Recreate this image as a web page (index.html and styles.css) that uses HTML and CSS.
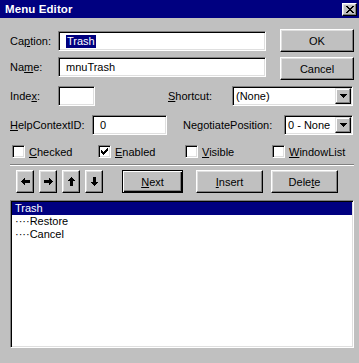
FILE: index.html
```html
<!DOCTYPE html>
<html>
<head>
<meta charset="utf-8">
<link rel="stylesheet" href="styles.css">
</head>
<body>
<div class="window">
  <div class="titlebar">
    <span class="title">Menu Editor</span>
    <div class="close">
      <svg width="8" height="7" viewBox="0 0 8 7" shape-rendering="crispEdges"><path d="M0 0h2v1h-2zM6 0h2v1h-2zM1 1h2v1h-2zM5 1h2v1h-2zM2 2h4v1h-4zM3 3h2v1h-2zM2 4h4v1h-4zM1 5h2v1h-2zM5 5h2v1h-2zM0 6h2v1h-2zM6 6h2v1h-2z" fill="#000"/></svg>
    </div>
  </div>
  <div class="content">
    <div class="top">
      <div class="fields">
        <div class="row row-caption">
          <span class="lbl w48">Ca<u>p</u>tion:</span>
          <div class="textbox w208"><span class="sel">Trash</span></div>
        </div>
        <div class="row row-name">
          <span class="lbl w48">Na<u>m</u>e:</span>
          <div class="textbox w208">mnuTrash</div>
        </div>
      </div>
      <div class="btns">
        <div class="btn">OK</div>
        <div class="btn">Cancel</div>
      </div>
    </div>
    <div class="row row3">
      <span class="lbl w48">Inde<u>x</u>:</span>
      <div class="textbox w37"></div>
      <span class="lbl shortcut-lbl"><u>S</u>hortcut:</span>
      <div class="combo w121">
        <span class="combo-text">(None)</span>
        <div class="drop"><svg width="7" height="4" viewBox="0 0 7 4" shape-rendering="crispEdges"><path d="M0 0h7v1h-7zM1 1h5v1h-5zM2 2h3v1h-3zM3 3h1v1h-1z" fill="#000"/></svg></div>
      </div>
    </div>
    <div class="row row4">
      <span class="lbl w82"><u>H</u>elpContextID:</span>
      <div class="textbox w75">0</div>
      <span class="lbl neg-lbl">Ne<u>g</u>otiatePosition:</span>
      <div class="combo w69">
        <span class="combo-text">0 - None</span>
        <div class="drop"><svg width="7" height="4" viewBox="0 0 7 4" shape-rendering="crispEdges"><path d="M0 0h7v1h-7zM1 1h5v1h-5zM2 2h3v1h-3zM3 3h1v1h-1z" fill="#000"/></svg></div>
      </div>
    </div>
    <div class="checks">
      <label class="chk"><span class="box"></span><span><u>C</u>hecked</span></label>
      <label class="chk"><span class="box"><svg width="7" height="7" viewBox="0 0 7 7" shape-rendering="crispEdges"><path d="M6 0h1v1h-1zM5 1h2v1h-2zM0 2h1v1h-1zM4 2h3v1h-3zM0 3h2v1h-2zM3 3h3v1h-3zM0 4h5v1h-5zM1 5h3v1h-3zM2 6h1v1h-1z" fill="#000"/></svg></span><span><u>E</u>nabled</span></label>
      <label class="chk"><span class="box"></span><span><u>V</u>isible</span></label>
      <label class="chk"><span class="box"></span><span><u>W</u>indowList</span></label>
    </div>
    <div class="sep"></div>
    <div class="actions">
      <div class="arrows">
        <div class="btn arrow"><svg width="9" height="7" viewBox="0 0 9 7" shape-rendering="crispEdges"><path d="M0 3h1v1h-1zM1 2h1v3h-1zM2 1h1v5h-1zM3 0h1v7h-1zM4 2h5v3h-5z" fill="#000"/></svg></div>
        <div class="btn arrow"><svg width="9" height="7" viewBox="0 0 9 7" shape-rendering="crispEdges"><path d="M8 3h1v1h-1zM7 2h1v3h-1zM6 1h1v5h-1zM5 0h1v7h-1zM0 2h5v3h-5z" fill="#000"/></svg></div>
        <div class="btn arrow"><svg width="7" height="9" viewBox="0 0 7 9" shape-rendering="crispEdges"><path d="M3 0h1v1h-1zM2 1h3v1h-3zM1 2h5v1h-5zM0 3h7v1h-7zM2 4h3v5h-3z" fill="#000"/></svg></div>
        <div class="btn arrow"><svg width="7" height="9" viewBox="0 0 7 9" shape-rendering="crispEdges"><path d="M3 8h1v1h-1zM2 7h3v1h-3zM1 6h5v1h-5zM0 5h7v1h-7zM2 0h3v5h-3z" fill="#000"/></svg></div>
      </div>
      <div class="btn default next-btn"><span><u>N</u>ext</span></div>
      <div class="btn insert-btn"><span><u>I</u>nsert</span></div>
      <div class="btn delete-btn"><span>Dele<u>t</u>e</span></div>
    </div>
    <div class="listbox">
      <div class="item selected">Trash</div>
      <div class="item">····Restore</div>
      <div class="item">····Cancel</div>
    </div>
  </div>
</div>
</body>
</html>
```
FILE: styles.css
```css
* { box-sizing: border-box; }
html, body { margin: 0; padding: 0; }
body { background: #c0c0c0; }

.window {
  width: 359px;
  height: 363px;
  background: #c0c0c0;
  font-family: "Liberation Sans", Arial, sans-serif;
  font-size: 11px;
  color: #000;
  overflow: hidden;
}

.titlebar {
  height: 18px;
  background: #000080;
  color: #fff;
  display: flex;
  align-items: center;
  justify-content: space-between;
  padding: 0 2px 0 5px;
}
.title { font-weight: bold; font-size: 11.5px; letter-spacing: 0.1px; }
.close {
  width: 15px;
  height: 13px;
  background: #c0c0c0;
  border: 1px solid;
  border-color: #fff #000 #000 #fff;
  box-shadow: inset -1px -1px #808080, inset 1px 1px #dfdfdf;
  display: flex;
  align-items: center;
  justify-content: center;
}

.content { padding: 11px 0 0 10px; }

.top { display: flex; }
.fields { width: 256px; display: flex; flex-direction: column; }
.row { display: flex; align-items: center; height: 20px; }
.row-caption { margin-top: 2px; }
.row-name { margin-top: 6px; }
.row3 { margin-top: 6px; }
.row4 { margin-top: 9px; }

.lbl { white-space: nowrap; flex: none; }
.w48 { width: 48px; }
.w82 { width: 82px; }
.shortcut-lbl { margin-left: 73px; width: 64px; }
.neg-lbl { margin-left: 16px; width: 101px; }

.textbox, .combo {
  height: 20px;
  background: #fff;
  border: 1px solid;
  border-color: #808080 #fff #fff #808080;
  box-shadow: inset 1px 1px #000, inset -1px -1px #dfdfdf;
  display: flex;
  align-items: center;
  flex: none;
  white-space: nowrap;
}
.textbox { padding-left: 7px; }
.combo { padding: 1px; }
.combo-text { flex: 1; padding-left: 2px; }
.w208 { width: 208px; }
.w37 { width: 37px; }
.w75 { width: 75px; }
.w121 { width: 121px; }
.w69 { width: 69px; }

.sel { background: #000080; color: #fff; padding: 0 1px; line-height: 13px; }

.drop {
  width: 16px;
  height: 16px;
  background: #c0c0c0;
  border: 1px solid;
  border-color: #dfdfdf #000 #000 #dfdfdf;
  box-shadow: inset -1px -1px #808080, inset 1px 1px #fff;
  display: flex;
  align-items: center;
  justify-content: center;
  flex: none;
}

.btns { margin-left: 14px; width: 74px; display: flex; flex-direction: column; gap: 5px; }
.btn {
  height: 23px;
  background: #c0c0c0;
  border: 1px solid;
  border-color: #fff #000 #000 #fff;
  box-shadow: inset -1px -1px #808080, inset 1px 1px #dfdfdf;
  display: flex;
  align-items: center;
  justify-content: center;
  flex: none;
}
.btn.default {
  border-color: #000;
  box-shadow: inset 1px 1px #fff, inset -1px -1px #000, inset -2px -2px #808080;
}

.checks {
  margin-top: 8px;
  height: 17px;
  display: grid;
  grid-template-columns: 86px 87px 87px auto;
  padding-left: 2px;
  align-items: center;
}
.chk { display: flex; align-items: center; gap: 4px; }
.box {
  width: 13px;
  height: 13px;
  background: #fff;
  border: 1px solid;
  border-color: #808080 #fff #fff #808080;
  box-shadow: inset 1px 1px #000, inset -1px -1px #dfdfdf;
  display: flex;
  align-items: center;
  justify-content: center;
  flex: none;
}

.sep {
  margin-top: 4px;
  width: 344px;
  height: 2px;
  border-top: 1px solid #808080;
  border-bottom: 1px solid #fff;
}

.actions { margin-top: 4px; display: flex; height: 23px; }
.arrows { margin-left: 6px; display: flex; gap: 5px; }
.arrow { width: 18px; }
.next-btn { margin-left: 19px; width: 61px; }
.insert-btn { margin-left: 13px; width: 67px; }
.delete-btn { margin-left: 8px; width: 67px; }

.listbox {
  margin-top: 7px;
  width: 344px;
  height: 148px;
  background: #fff;
  border: 1px solid;
  border-color: #808080 #fff #fff #808080;
  box-shadow: inset 1px 1px #000, inset -1px -1px #dfdfdf;
  padding: 1px;
}
.item { height: 13px; line-height: 13px; padding-left: 3px; white-space: nowrap; }
.item.selected { background: #000080; color: #fff; }
```
